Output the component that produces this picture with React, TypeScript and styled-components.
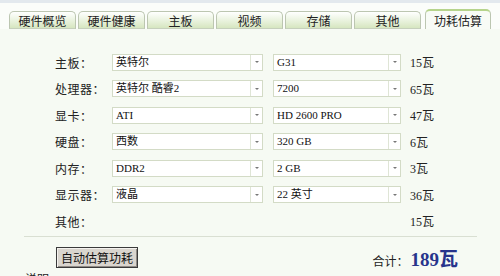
import React from "react";
import styled, { createGlobalStyle } from "styled-components";

const GlobalStyle = createGlobalStyle`
  html, body {
    margin: 0;
    padding: 0;
    background: #f6faf3;
  }
  body {
    font-family: "Noto Sans CJK SC", "Liberation Serif", sans-serif;
    font-size: 12px;
    color: #222;
  }
`;

const Page = styled.div`
  width: 500px;
  height: 276px;
  overflow: hidden;
  background: #f6faf3;
`;

const TopStrip = styled.div`
  height: 3px;
  background: #e3e9ee;
`;

const TabBar = styled.div`
  display: flex;
  align-items: flex-end;
  gap: 2px;
  height: 26px;
  padding-left: 9px;
  background: #fbfdfa;
`;

const Tab = styled.div<{ $active?: boolean }>`
  box-sizing: border-box;
  width: ${(p) => (p.$active ? "66px" : "67px")};
  margin-left: ${(p) => (p.$active ? "2px" : "0")};
  height: ${(p) => (p.$active ? "20px" : "18px")};
  display: flex;
  align-items: center;
  justify-content: center;
  border: 1px solid #bcc6b1;
  border-bottom: ${(p) => (p.$active ? "none" : "1px solid #c6d0bc")};
  border-top: ${(p) => (p.$active ? "2px solid #b6d48c" : "1px solid #bcc6b1")};
  border-radius: 5px 5px 0 0;
  background: ${(p) =>
    p.$active ? "#f8fbf6" : "linear-gradient(#ffffff, #e9f2dd 55%, #d6e6c0)"};
  font-size: 12px;
  color: #222;
`;

const Content = styled.div`
  padding: 20px 23px 0 24px;
`;

const Form = styled.div`
  display: grid;
  grid-template-columns: 57px 161px 137px auto;
  grid-auto-rows: 26.5px;
  align-items: center;
  margin-left: 31px;
`;

const Label = styled.span`
  font-size: 12px;
  letter-spacing: 0.5px;
`;

const Select = styled.div<{ $width: number }>`
  box-sizing: border-box;
  width: ${(p) => p.$width}px;
  height: 17px;
  display: flex;
  background: #ffffff;
  border: 1px solid #d3dbc6;
`;

const SelectValue = styled.span`
  flex: 1;
  padding-left: 3px;
  line-height: 15px;
  font-family: "Liberation Serif", "Noto Sans CJK SC", serif;
  font-size: 11px;
  color: #111;
  white-space: pre;
`;

const SelectArrow = styled.span`
  width: 11px;
  border-left: 1px solid #dfe5d6;
  display: flex;
  align-items: center;
  justify-content: center;
  &::after {
    content: "";
    border-left: 2px solid transparent;
    border-right: 2px solid transparent;
    border-top: 2px solid #777;
  }
`;

const Watt = styled.span`
  font-family: "Liberation Serif", "Noto Sans CJK SC", serif;
  font-size: 12px;
`;

const Divider = styled.div`
  height: 1px;
  background: #d9dfd2;
  margin-top: 1px;
`;

const Footer = styled.div`
  display: flex;
  align-items: center;
  justify-content: space-between;
  padding: 7px 19px 0 32px;
`;

const Button = styled.button`
  box-sizing: border-box;
  width: 82px;
  height: 21px;
  padding: 0;
  background: #d9d5ce;
  border: 1px solid #3a3a3a;
  box-shadow: inset 1px 1px #f4f2ee, inset -1px -1px #8e8a84;
  font-family: "Noto Sans CJK SC", sans-serif;
  font-size: 12px;
  color: #111;
`;

const Total = styled.div`
  display: flex;
  align-items: baseline;
  gap: 2px;
`;

const TotalLabel = styled.span`
  font-size: 12px;
`;

const TotalValue = styled.span`
  font-family: "Liberation Serif", "Noto Sans CJK SC", serif;
  font-weight: bold;
  font-size: 19px;
  color: #27348b;
`;

const Note = styled.div`
  margin-top: -1px;
  padding-left: 1px;
  font-size: 12px;
`;

const tabs = ["硬件概览", "硬件健康", "主板", "视频", "存储", "其他", "功耗估算"];

const rows = [
  { label: "主板：", brand: "英特尔", model: "G31", watt: "15瓦" },
  { label: "处理器：", brand: "英特尔 酷睿2", model: "7200", watt: "65瓦" },
  { label: "显卡：", brand: "ATI", model: "HD 2600 PRO", watt: "47瓦" },
  { label: "硬盘：", brand: "西数", model: "320 GB", watt: "6瓦" },
  { label: "内存：", brand: "DDR2", model: "2 GB", watt: "3瓦" },
  { label: "显示器：", brand: "液晶", model: "22 英寸", watt: "36瓦" },
];

const Dropdown: React.FC<{ value: string; width: number }> = ({ value, width }) => (
  <Select $width={width}>
    <SelectValue>{value}</SelectValue>
    <SelectArrow />
  </Select>
);

export default function App() {
  return (
    <Page>
      <GlobalStyle />
      <TopStrip />
      <TabBar>
        {tabs.map((t, i) => (
          <Tab key={t} $active={i === tabs.length - 1}>
            {t}
          </Tab>
        ))}
      </TabBar>
      <Content>
        <Form>
          {rows.map((r) => (
            <React.Fragment key={r.label}>
              <Label>{r.label}</Label>
              <Dropdown value={r.brand} width={151} />
              <Dropdown value={r.model} width={128} />
              <Watt>{r.watt}</Watt>
            </React.Fragment>
          ))}
          <Label>其他：</Label>
          <span />
          <span />
          <Watt>15瓦</Watt>
        </Form>
        <Divider />
        <Footer>
          <Button>自动估算功耗</Button>
          <Total>
            <TotalLabel>合计：</TotalLabel>
            <TotalValue>189瓦</TotalValue>
          </Total>
        </Footer>
        <Note>说明：</Note>
      </Content>
    </Page>
  );
}
